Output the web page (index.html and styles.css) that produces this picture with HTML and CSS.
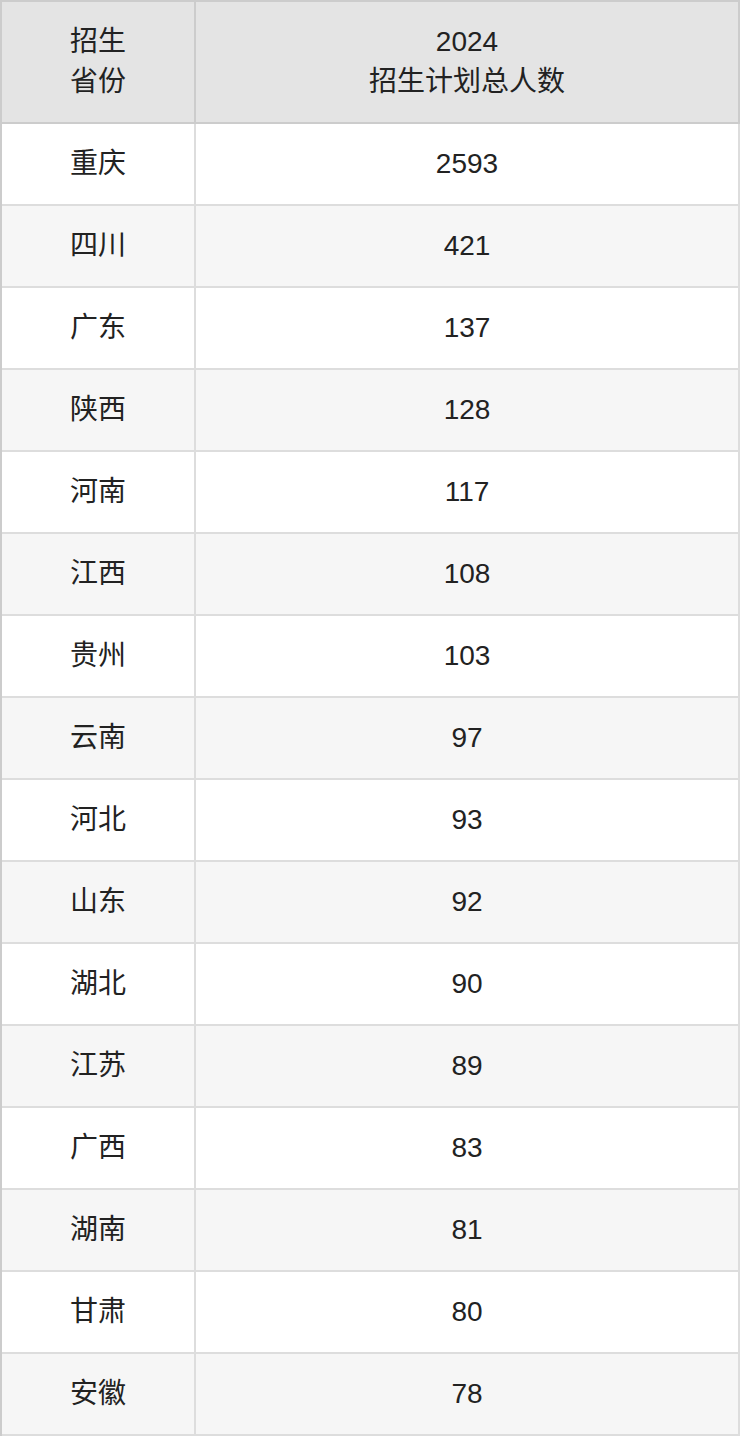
FILE: index.html
```html
<!DOCTYPE html>
<html lang="zh">
<head>
<meta charset="utf-8">
<link rel="stylesheet" href="styles.css">
</head>
<body>
<div class="table">
  <div class="cell head">招生<br>省份</div>
  <div class="cell head">2024<br>招生计划总人数</div>
  <div class="cell">重庆</div><div class="cell">2593</div>
  <div class="cell alt">四川</div><div class="cell alt">421</div>
  <div class="cell">广东</div><div class="cell">137</div>
  <div class="cell alt">陕西</div><div class="cell alt">128</div>
  <div class="cell">河南</div><div class="cell">117</div>
  <div class="cell alt">江西</div><div class="cell alt">108</div>
  <div class="cell">贵州</div><div class="cell">103</div>
  <div class="cell alt">云南</div><div class="cell alt">97</div>
  <div class="cell">河北</div><div class="cell">93</div>
  <div class="cell alt">山东</div><div class="cell alt">92</div>
  <div class="cell">湖北</div><div class="cell">90</div>
  <div class="cell alt">江苏</div><div class="cell alt">89</div>
  <div class="cell">广西</div><div class="cell">83</div>
  <div class="cell alt">湖南</div><div class="cell alt">81</div>
  <div class="cell">甘肃</div><div class="cell">80</div>
  <div class="cell alt">安徽</div><div class="cell alt">78</div>
</div>
</body>
</html>
```

FILE: styles.css
```css
html, body {
  margin: 0;
  padding: 0;
  background: #ffffff;
}
.table {
  width: 740px;
  box-sizing: border-box;
  display: grid;
  grid-template-columns: 194px 544px;
  grid-template-rows: 122px repeat(16, 82px);
  border-top: 2px solid #cccccc;
  border-left: 2px solid #cccccc;
  font-family: "Liberation Sans", "Noto Sans CJK SC", sans-serif;
  font-size: 28px;
  line-height: 40px;
  color: #222222;
}
.cell {
  box-sizing: border-box;
  display: flex;
  align-items: center;
  justify-content: center;
  text-align: center;
  border-right: 2px solid #dddddd;
  border-bottom: 2px solid #dddddd;
  background: #ffffff;
}
.cell.alt {
  background: #f6f6f6;
}
.cell.head {
  background: #e4e4e4;
  border-right-color: #cccccc;
  border-bottom-color: #cccccc;
}
```
